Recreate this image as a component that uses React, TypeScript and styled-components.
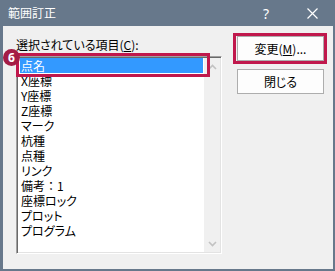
import styled, { createGlobalStyle } from 'styled-components'

const GlobalStyle = createGlobalStyle`
  html, body {
    margin: 0;
    padding: 0;
    background: #ffffff;
  }
  body {
    font-family: 'Noto Sans CJK JP', 'Noto Sans', sans-serif;
    font-feature-settings: 'palt';
  }
`

// fullWidth: keep full-width punctuation (the colon in 備考：1)
const items = [
  { text: '点名' },
  { text: 'X座標' },
  { text: 'Y座標' },
  { text: 'Z座標' },
  { text: 'マーク' },
  { text: '杭種' },
  { text: '点種' },
  { text: 'リンク' },
  { text: '備考：1', fullWidth: true },
  { text: '座標ロック' },
  { text: 'プロット' },
  { text: 'プログラム' },
]

export default function App() {
  return (
    <>
      <GlobalStyle />
      <Window>
        <TitleBar>
          <Title>範囲訂正</Title>
          <TitleButton>?</TitleButton>
          <TitleButton>
            <svg width='11' height='11' viewBox='0 0 11 11'>
              <path d='M0.5 0.5 L10.5 10.5 M10.5 0.5 L0.5 10.5' stroke='#ffffff' strokeWidth='1.2' />
            </svg>
          </TitleButton>
        </TitleBar>

        <Client>
          <LeftColumn>
            <Label>
              選択されている項目(<u>C</u>):
            </Label>
            <ListBox>
              <ListBody>
                {items.map((item, i) => (
                  <ListItem key={item.text} $selected={i === 0} $fullWidth={item.fullWidth}>
                    {item.text}
                  </ListItem>
                ))}
              </ListBody>
              <ScrollBar>
                <ScrollArrow>
                  <svg width='9' height='6' viewBox='0 0 9 6'>
                    <path d='M1 5 L4.5 1.5 L8 5' fill='none' stroke='#c2c2c2' strokeWidth='1.6' />
                  </svg>
                </ScrollArrow>
                <ScrollArrow>
                  <svg width='9' height='6' viewBox='0 0 9 6'>
                    <path d='M1 1 L4.5 4.5 L8 1' fill='none' stroke='#c2c2c2' strokeWidth='1.6' />
                  </svg>
                </ScrollArrow>
              </ScrollBar>
              <ListHighlight />
              <Badge>6</Badge>
            </ListBox>
          </LeftColumn>

          <RightColumn>
            <ButtonWrap>
              <Button>
                変更(<u>M</u>)...
              </Button>
              <ButtonHighlight />
            </ButtonWrap>
            <Button>閉じる</Button>
          </RightColumn>
        </Client>
      </Window>
    </>
  )
}

const Window = styled.div`
  width: 335px;
  height: 271px;
  box-sizing: border-box;
  display: flex;
  flex-direction: column;
  background: #67788b;
`

const TitleBar = styled.div`
  height: 26px;
  flex: none;
  display: flex;
  align-items: center;
  padding-left: 8px;
  color: #ffffff;
`

const Title = styled.div`
  flex: 1;
  font-size: 12px;
  line-height: 26px;
`

const TitleButton = styled.div`
  width: 46px;
  height: 26px;
  display: flex;
  align-items: center;
  justify-content: center;
  font-family: 'Noto Sans', sans-serif;
  font-size: 14px;
`

const Client = styled.div`
  flex: 1;
  margin: 0 2px 2px 3px;
  background: #f0f0f0;
  display: flex;
  gap: 15px;
  padding: 10px 9px 0 13px;
`

const LeftColumn = styled.div`
  width: 206px;
  display: flex;
  flex-direction: column;
`

const Label = styled.div`
  margin-top: 1px;
  height: 16px;
  font-size: 12px;
  line-height: 16px;
  color: #000000;
  white-space: nowrap;
`

const ListBox = styled.div`
  position: relative;
  margin-top: 3px;
  height: 198px;
  box-sizing: border-box;
  display: flex;
  border-top: 1px solid #a0a0a0;
  border-left: 1px solid #a0a0a0;
  border-right: 1px solid #ffffff;
  border-bottom: 1px solid #ffffff;
  box-shadow: inset 1px 1px 0 #696969, inset -1px -1px 0 #e3e3e3;
  padding: 1px;
`

const ListBody = styled.div`
  flex: 1;
  background: #ffffff;
  padding: 0 1px 0 2px;
`

const ListItem = styled.div<{ $selected?: boolean; $fullWidth?: boolean }>`
  height: 15px;
  line-height: 15px;
  padding-left: 1px;
  font-size: 12px;
  font-feature-settings: ${(p) => (p.$fullWidth ? 'normal' : "'palt'")};
  color: ${(p) => (p.$selected ? '#ffffff' : '#000000')};
  background: ${(p) => (p.$selected ? '#3399ff' : 'transparent')};
  white-space: nowrap;
`

const ScrollBar = styled.div`
  width: 16px;
  background: #f0f0f0;
  display: flex;
  flex-direction: column;
  justify-content: space-between;
`

const ScrollArrow = styled.div`
  height: 17px;
  display: flex;
  align-items: center;
  justify-content: center;
`

const ListHighlight = styled.div`
  position: absolute;
  left: -1px;
  top: -4px;
  width: 194px;
  height: 24px;
  box-sizing: border-box;
  border: 3px solid #c0184c;
`

const Badge = styled.div`
  position: absolute;
  left: -14px;
  top: -8px;
  width: 17px;
  height: 17px;
  border-radius: 50%;
  background: #a41d45;
  color: #ffffff;
  font-family: 'Noto Sans', sans-serif;
  font-weight: 700;
  font-size: 12px;
  line-height: 17px;
  text-align: center;
`

const RightColumn = styled.div`
  display: flex;
  flex-direction: column;
  gap: 8px;
`

const ButtonWrap = styled.div`
  position: relative;
`

const Button = styled.div`
  width: 87px;
  height: 25px;
  box-sizing: border-box;
  border: 1px solid #adadad;
  background: #fdfdfd;
  display: flex;
  align-items: center;
  justify-content: center;
  font-size: 12px;
  color: #000000;
`

const ButtonHighlight = styled.div`
  position: absolute;
  inset: -3px -3px -3px -4px;
  border: 3px solid #c0184c;
`
